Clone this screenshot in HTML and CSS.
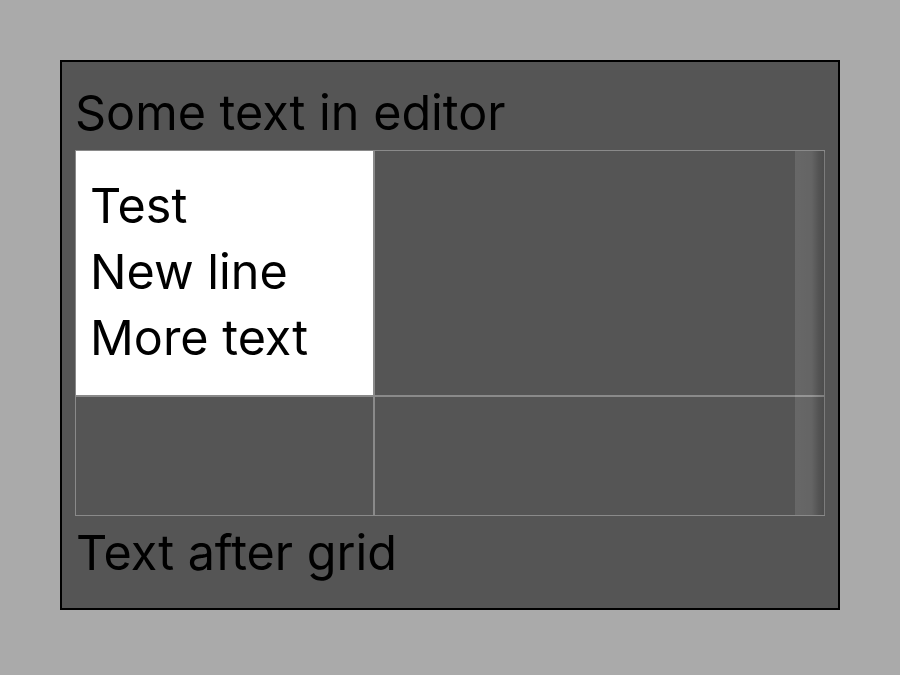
FILE: index.html
```html
<!DOCTYPE html>
<html>
<head>
<meta charset="utf-8">
<link rel="stylesheet" href="styles.css">
</head>
<body>
<div class="editor">
  <p class="line line-top">Some text in editor</p>
  <div class="grid-wrap">
    <div class="grid">
      <div class="cell cell-white">
        <div class="cell-line">Test</div>
        <div class="cell-line">New line</div>
        <div class="cell-line">More text</div>
      </div>
      <div class="cell"></div>
      <div class="cell"></div>
      <div class="cell"></div>
    </div>
    <div class="scroll-shadow"></div>
  </div>
  <p class="line line-bottom">Text after grid</p>
</div>
</body>
</html>
```

FILE: styles.css
```css
html, body {
  margin: 0;
  padding: 0;
}
body {
  background: #aaaaaa;
  padding: 60px;
  font-family: Inter, "Noto Sans", sans-serif;
  color: #000;
}
.editor {
  width: 780px;
  height: 550px;
  box-sizing: border-box;
  border: 2px solid #000;
  background: #555555;
  padding: 22px 13px 0 13px;
}
.line {
  margin: 0;
  font-size: 48.5px;
  line-height: 58px;
  height: 58px;
  padding-left: 0;
}
.line-top {
  margin-bottom: 8px;
}
.line-bottom {
  margin-top: 8px;
  padding-left: 1px;
}
.grid-wrap {
  position: relative;
  width: 750px;
}
.grid {
  display: grid;
  grid-template-columns: 299px 451px;
  grid-template-rows: 246px 120px;
}
.cell {
  box-sizing: border-box;
  border: 1px solid #8a8a8a;
}
.cell-white {
  background: #ffffff;
  padding: 22px 0 0 14px;
}
.cell-line {
  font-size: 48.5px;
  line-height: 66px;
  height: 66px;
}
.scroll-shadow {
  position: absolute;
  top: 1px;
  right: 0;
  bottom: 1px;
  width: 30px;
  border-top-right-radius: 3px;
  background: linear-gradient(to right, rgba(255,255,255,0.11), rgba(255,255,255,0.09) 55%, rgba(0,0,0,0.03) 80%, rgba(0,0,0,0.11));
}
```
